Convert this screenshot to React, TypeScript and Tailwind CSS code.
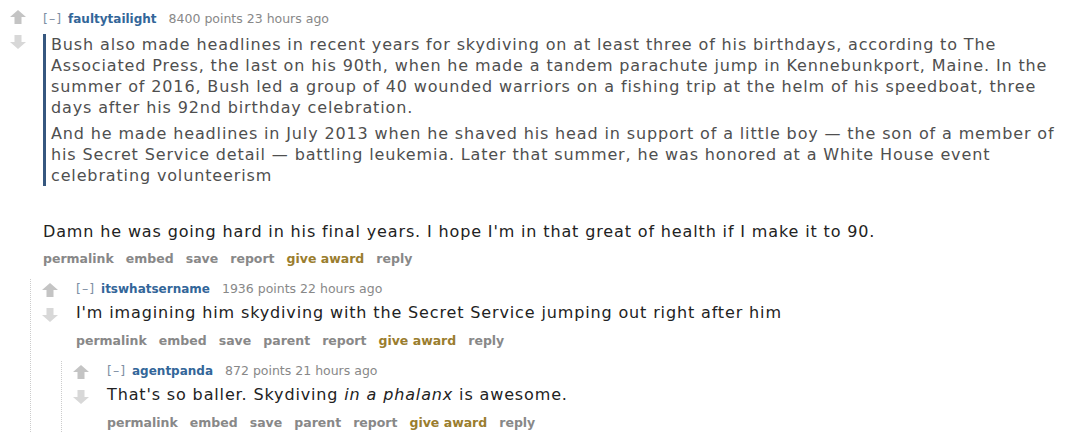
import React from 'react'

const font = { fontFamily: '"DejaVu Sans", Verdana, sans-serif' }

function Arrows({ top }: { top: string }) {
  return (
    <div className={`flex w-4 shrink-0 flex-col items-center gap-[11px] ${top}`}>
      <svg width="16" height="14" viewBox="0 0 16 14">
        <path d="M8 0 L16 7 L11.5 7 L11.5 14 L4.5 14 L4.5 7 L0 7 Z" fill="#c4c4c4" />
      </svg>
      <svg width="16" height="14" viewBox="0 0 16 14">
        <path d="M4.5 0 L11.5 0 L11.5 7 L16 7 L8 14 L0 7 L4.5 7 Z" fill="#d8d8d8" />
      </svg>
    </div>
  )
}

function Tagline({ author, points, age }: { author: string; points: number; age: string }) {
  return (
    <p className="text-[12.5px] leading-[16px] text-[#888]">
      <span className="mr-[6px] tracking-[1px] text-[#7d8ea3]">[–]</span>
      <span className="text-[12px] font-bold text-[#369]">{author}</span>
      <span className="ml-[12px]">{points} points {age}</span>
    </p>
  )
}

function Buttons({ parent }: { parent?: boolean }) {
  const items = ['permalink', 'embed', 'save', ...(parent ? ['parent'] : []), 'report']
  return (
    <ul className="flex gap-[12px] text-[12.5px] font-bold leading-[18px] text-[#888]">
      {items.map(i => (
        <li key={i}>{i}</li>
      ))}
      <li className="text-[#9a7d2e]">give award</li>
      <li>reply</li>
    </ul>
  )
}

const body = 'text-[16px] leading-[21px] tracking-[0.86px]'

export default function App() {
  return (
    <div className="h-[439px] w-[1068px] overflow-hidden bg-white" style={font}>
      <div className="flex gap-[17px] pl-[10px]">
        <Arrows top="pt-[10px]" />
        <div className="w-[1024px] pt-[11px]">
          <Tagline author="faultytailight" points={8400} age="23 hours ago" />
          <blockquote className={`mt-[7px] border-l-[3px] border-[#36577f] pl-[5px] text-[#4f4f4f] ${body}`}>
            <p>
              Bush also made headlines in recent years for skydiving on at least three of his birthdays, according to The
              Associated Press, the last on his 90th, when he made a tandem parachute jump in Kennebunkport, Maine. In the
              summer of 2016, Bush led a group of 40 wounded warriors on a fishing trip at the helm of his speedboat, three
              days after his 92nd birthday celebration.
            </p>
            <p className="mt-[5px]">
              And he made headlines in July 2013 when he shaved his head in support of a little boy — the son of a member of
              his Secret Service detail — battling leukemia. Later that summer, he was honored at a White House event
              celebrating volunteerism
            </p>
          </blockquote>
          <p className={`mt-[35px] text-[#222] ${body}`}>
            Damn he was going hard in his final years. I hope I'm in that great of health if I make it to 90.
          </p>
          <div className="mt-[8px]">
            <Buttons />
          </div>
        </div>
      </div>

      <div className="ml-[30px] mt-[11px] border-l border-dotted border-[#ccc]">
        <div className="flex gap-[18px] pl-[11px]">
          <Arrows top="pt-[4px]" />
          <div className="pt-[2px]">
            <Tagline author="itswhatsername" points={1936} age="22 hours ago" />
            <p className={`mt-[5px] text-[#222] ${body}`}>
              I'm imagining him skydiving with the Secret Service jumping out right after him
            </p>
            <div className="mt-[9px]">
              <Buttons parent />
            </div>
          </div>
        </div>

        <div className="ml-[30px] mt-[11px] border-l border-dotted border-[#ccc]">
          <div className="flex gap-[18px] pl-[11px]">
            <Arrows top="pt-[4px]" />
            <div className="pt-[2px]">
              <Tagline author="agentpanda" points={872} age="21 hours ago" />
              <p className={`mt-[5px] text-[#222] ${body}`}>
                That's so baller. Skydiving <em>in a phalanx</em> is awesome.
              </p>
              <div className="mt-[9px]">
                <Buttons parent />
              </div>
            </div>
          </div>
        </div>
      </div>
    </div>
  )
}
